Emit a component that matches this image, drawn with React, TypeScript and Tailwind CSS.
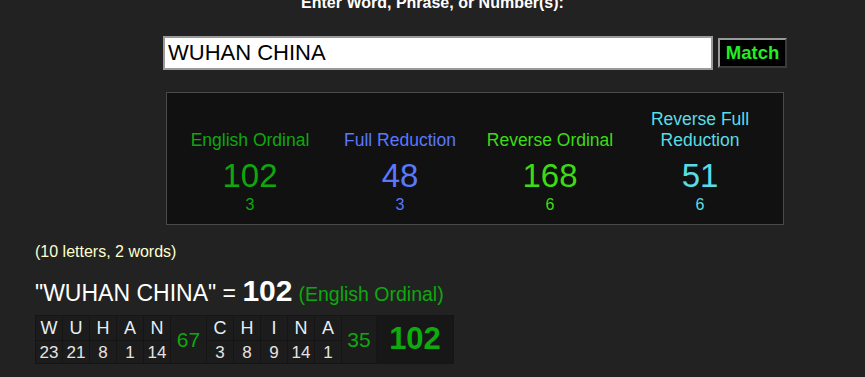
import React from "react";

const letters1 = [
  ["W", 23],
  ["U", 21],
  ["H", 8],
  ["A", 1],
  ["N", 14],
] as const;
const letters2 = [
  ["C", 3],
  ["H", 8],
  ["I", 9],
  ["N", 14],
  ["A", 1],
] as const;

export default function App() {
  return (
    <div
      className="min-h-[377px] w-[865px] overflow-hidden bg-[#222222] text-white"
      style={{ fontFamily: '"Liberation Sans", Arial, sans-serif' }}
    >
      <div className="-mt-[7px] text-center text-[16px] font-bold leading-[19px] whitespace-nowrap">
        Enter Word, Phrase, or Number(s):
      </div>

      <div className="mt-[24px] flex items-center pl-[163px]">
        <div className="flex h-[34px] w-[550px] items-center overflow-hidden border-2 border-[#9a9a9a] bg-white pl-[3px]">
          <span className="text-[22px] leading-none text-black whitespace-nowrap">WUHAN CHINA</span>
        </div>
        <div className="ml-[5px] flex h-[30px] w-[69px] items-center justify-center border-2 border-t-[#9a9a9a] border-l-[#9a9a9a] border-b-[#3a3a3a] border-r-[#3a3a3a] bg-black text-[18.5px] font-bold text-[#22ee22]">
          Match
        </div>
      </div>

      <div className="ml-[166px] mt-[22px] w-[618px] border border-[#4a4a4a] bg-[#111111] pt-[16px] pb-[10px]">
        <div className="mx-auto grid w-[600px] grid-cols-4 items-end text-center">
          <Cipher label={["English Ordinal"]} value="102" red="3" color="text-[#0ea80e]" />
          <Cipher label={["Full Reduction"]} value="48" red="3" color="text-[#5a78ff]" />
          <Cipher label={["Reverse Ordinal"]} value="168" red="6" color="text-[#3cdc14]" />
          <Cipher label={["Reverse Full", "Reduction"]} value="51" red="6" color="text-[#5adce6]" />
        </div>
      </div>

      <div className="pl-[35px]">
        <div className="mt-[17px] text-[16px] leading-[20px] text-[#ffffcc]">(10 letters, 2 words)</div>

        <div className="mt-[14px] flex items-baseline whitespace-nowrap">
          <span className="text-[23px] leading-[23px] text-white">"WUHAN CHINA" =&nbsp;</span>
          <span className="text-[30px] font-bold leading-[30px] text-white">102</span>
          <span className="ml-[6px] text-[19.5px] leading-[19px] text-[#0ea80e]">(English Ordinal)</span>
        </div>

        <table className="mt-[9px] border-separate border-spacing-[1px] bg-[#151515] text-center">
          <tbody>
            <tr>
              {letters1.map(([l], i) => (
                <td key={"a" + i} className="h-[24px] w-[26px] bg-[#1c1c1c] p-0 text-[18px] leading-none text-[#e4eef8]">
                  {l}
                </td>
              ))}
              <td rowSpan={2} className="w-[35px] bg-[#1c1c1c] p-0 text-[21px] text-[#0ea80e]">
                67
              </td>
              {letters2.map(([l], i) => (
                <td key={"b" + i} className="h-[24px] w-[26px] bg-[#1c1c1c] p-0 text-[18px] leading-none text-[#e4eef8]">
                  {l}
                </td>
              ))}
              <td rowSpan={2} className="w-[34px] bg-[#1c1c1c] p-0 text-[21px] text-[#0ea80e]">
                35
              </td>
              <td rowSpan={2} className="w-[76px] bg-[#171717] p-0 text-[31px] font-bold text-[#0eaa0e]">
                102
              </td>
            </tr>
            <tr>
              {letters1.map(([, n], i) => (
                <td key={"c" + i} className="h-[22px] w-[26px] bg-[#1c1c1c] p-0 text-[17px] leading-none text-[#e4e4e4]">
                  {n}
                </td>
              ))}
              {letters2.map(([, n], i) => (
                <td key={"d" + i} className="h-[22px] w-[26px] bg-[#1c1c1c] p-0 text-[17px] leading-none text-[#e4e4e4]">
                  {n}
                </td>
              ))}
            </tr>
          </tbody>
        </table>
      </div>
    </div>
  );
}

function Cipher({
  label,
  value,
  red,
  color,
}: {
  label: string[];
  value: string;
  red: string;
  color: string;
}) {
  return (
    <div className={"flex flex-col items-center " + color}>
      <div className="text-[17.5px] leading-[21px] whitespace-nowrap">
        {label.map((t) => (
          <div key={t}>{t}</div>
        ))}
      </div>
      <div className="mt-[7px] text-[33px] leading-[36px]">{value}</div>
      <div className="mt-[2px] text-[16px] leading-[18px]">{red}</div>
    </div>
  );
}
